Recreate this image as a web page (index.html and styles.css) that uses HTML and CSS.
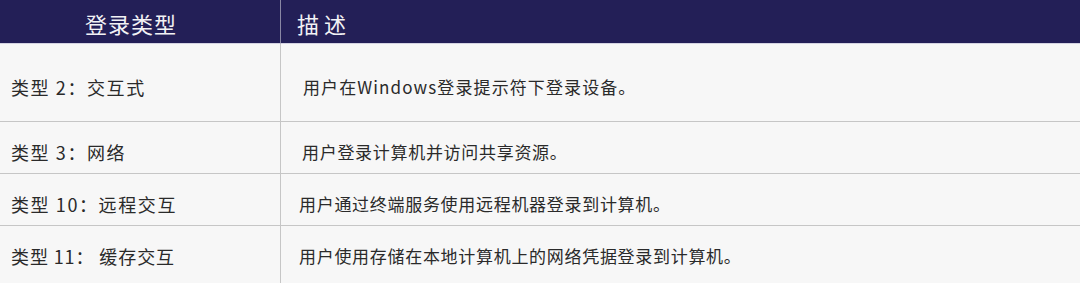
FILE: index.html
```html
<!DOCTYPE html>
<html lang="zh-CN">
<head>
<meta charset="utf-8">
<title>登录类型</title>
<link rel="stylesheet" href="styles.css">
</head>
<body>
<div class="table">
  <div class="cell head head-type">登录类型</div>
  <div class="cell head head-desc">描 述</div>

  <div class="cell body key row-first">类型 2：交互式</div>
  <div class="cell body desc row-first shift-4 wide">用户在Windows登录提示符下登录设备。</div>

  <div class="cell body key">类型 3：网络</div>
  <div class="cell body desc shift-3">用户登录计算机并访问共享资源。</div>

  <div class="cell body key">类型 10：远程交互</div>
  <div class="cell body desc">用户通过终端服务使用远程机器登录到计算机。</div>

  <div class="cell body key row-last tight">类型 11： 缓存交互</div>
  <div class="cell body desc row-last">用户使用存储在本地计算机上的网络凭据登录到计算机。</div>
</div>
</body>
</html>
```

FILE: styles.css
```css
html, body {
  margin: 0;
  padding: 0;
  background: #f7f7f7;
}

body {
  font-family: "Noto Sans CJK SC", "Noto Sans", sans-serif;
  color: #2a2a2a;
}

.table {
  display: grid;
  grid-template-columns: 281px 1fr;
  width: 1080px;
}

.cell {
  box-sizing: border-box;
  white-space: nowrap;
}

.head {
  height: 44px;
  background: #231f57;
  color: #f2f2f5;
  font-size: 22px;
  line-height: 30px;
  padding-top: 8px;
  border-bottom: 1px solid #d4d3e2;
}

.head-type {
  border-right: 1px solid #8a88a4;
  text-align: center;
  padding-right: 18px;
  letter-spacing: 1px;
}

.head-desc {
  padding-left: 16px;
}

.body {
  background: #f7f7f7;
  border-bottom: 1px solid #c6c6c6;
  line-height: 22px;
  padding-top: 19px;
  padding-bottom: 10px;
}

.key {
  border-right: 1px solid #c6c6c6;
  padding-left: 11px;
  font-size: 18px;
  letter-spacing: 1.6px;
}

.tight {
  letter-spacing: 0.9px;
}

.desc {
  padding-left: 18px;
  font-size: 17px;
  letter-spacing: 0.7px;
}

.wide {
  letter-spacing: 1.1px;
}

.shift-4 {
  padding-left: 22px;
}

.shift-3 {
  padding-left: 21px;
}

.row-first {
  padding-top: 32px;
  padding-bottom: 23px;
}

.row-last {
  border-bottom: none;
  padding-bottom: 20px;
}
```
